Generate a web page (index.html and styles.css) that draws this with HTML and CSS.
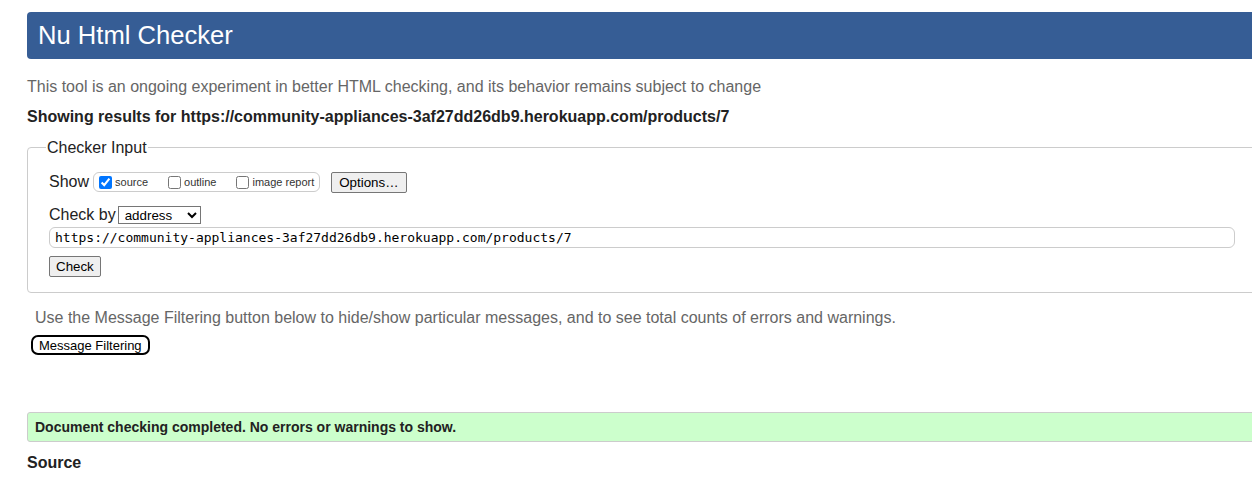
FILE: index.html
```html
<!DOCTYPE html>
<html lang="en">
<head>
<meta charset="utf-8">
<title>Showing results for https://community-appliances-3af27dd26db9.herokuapp.com/products/7 - Nu Html Checker</title>
<link rel="stylesheet" href="styles.css">
</head>
<body>
<div class="page">
  <h1 class="title">Nu Html Checker</h1>
  <p class="tagline">This tool is an ongoing experiment in better HTML checking, and its behavior remains subject to change</p>
  <p class="results-for">Showing results for https://community-appliances-3af27dd26db9.herokuapp.com/products/7</p>
  <form class="checker">
    <fieldset class="input-set">
      <legend class="legend">Checker Input</legend>
      <div class="show-row">
        <span class="row-label">Show</span>
        <span class="show-group">
          <label class="opt"><input type="checkbox" class="cb" checked>source</label>
          <label class="opt"><input type="checkbox" class="cb">outline</label>
          <label class="opt"><input type="checkbox" class="cb">image report</label>
        </span>
        <button type="button" class="btn options">Options…</button>
      </div>
      <div class="by-row">
        <span class="row-label">Check by</span>
        <select class="select"><option>address</option></select>
      </div>
      <input class="url" type="text" value="https://community-appliances-3af27dd26db9.herokuapp.com/products/7">
      <div class="check-row"><button type="button" class="btn check">Check</button></div>
    </fieldset>
  </form>
  <p class="filter-note">Use the Message Filtering button below to hide/show particular messages, and to see total counts of errors and warnings.</p>
  <button type="button" class="filter-btn">Message Filtering</button>
  <p class="success">Document checking completed. No errors or warnings to show.</p>
  <h2 class="source">Source</h2>
</div>
</body>
</html>
```
FILE: styles.css
```css
html, body {
  margin: 0;
  padding: 0;
  overflow: hidden;
  background: #fff;
}
body {
  font-family: "Liberation Sans", Arial, sans-serif;
  color: #222;
}
.page {
  width: 1230px;
  padding: 12px 0 0 27px;
}
.title {
  margin: 0;
  height: 47px;
  box-sizing: border-box;
  padding: 0 0 0 11px;
  background: #365d95;
  color: #fff;
  font-weight: normal;
  font-size: 25.6px;
  line-height: 47px;
  border-radius: 4px;
}
.tagline {
  margin: 18px 0 0;
  font-size: 16px;
  line-height: 19px;
  color: #666;
}
.results-for {
  margin: 11px 0 0;
  font-size: 16px;
  line-height: 19px;
  font-weight: bold;
  color: #222;
}
.checker {
  margin: 0;
}
.input-set {
  margin: 12px 0 0;
  padding: 14px 21px 15px 21px;
  border: 1px solid #ccc;
  border-radius: 4px;
  min-width: 0;
}
.legend {
  padding: 0 1px;
  margin-left: -3px;
  font-size: 16px;
  line-height: 19px;
  color: #222;
}
.show-row {
  display: flex;
  align-items: center;
  height: 22px;
}
.row-label {
  font-size: 16px;
  color: #222;
}
.show-group {
  display: inline-flex;
  align-items: center;
  margin-left: 4px;
  height: 18px;
  padding: 0 5px 0 5px;
  border: 1px solid #ccc;
  border-radius: 6px;
  gap: 20px;
}
.opt {
  display: inline-flex;
  align-items: center;
  font-size: 11px;
  color: #333;
}
.cb {
  margin: 0 3px 0 0;
  width: 13px;
  height: 13px;
}
.btn {
  font-family: "Liberation Sans", Arial, sans-serif;
  font-size: 13.33px;
  background: #efefef;
  border: 1px solid #767676;
  border-radius: 2px;
  color: #000;
  padding: 1px 6px;
}
.options {
  margin-left: 11px;
  height: 21px;
  padding: 1px 7px;
}
.by-row {
  display: flex;
  align-items: center;
  margin-top: 12px;
  height: 20px;
}
.select {
  margin-left: 2px;
  font-family: "Liberation Sans", Arial, sans-serif;
  font-size: 13.33px;
  width: 83px;
  height: 18px;
  padding: 0 0 0 2px;
  border: 1px solid #767676;
  border-radius: 0;
  background: #fff;
  color: #000;
}
.url {
  display: block;
  box-sizing: border-box;
  width: 100%;
  height: 21px;
  margin-top: 2px;
  padding: 0 5px;
  font-family: "DejaVu Sans Mono", monospace;
  font-size: 13px;
  color: #000;
  border: 1px solid #ccc;
  border-radius: 6px;
  background: #fff;
}
.check-row {
  margin-top: 8px;
}
.check {
  height: 21px;
}
.filter-note {
  margin: 15px 0 0 8px;
  font-size: 16px;
  line-height: 19px;
  color: #666;
}
.filter-btn {
  display: block;
  margin: 8px 0 0 4px;
  height: 20px;
  padding: 0 6px;
  font-family: "Liberation Sans", Arial, sans-serif;
  font-size: 13px;
  color: #000;
  background: #fff;
  border: 2px solid #000;
  border-radius: 7px;
}
.success {
  margin: 57px 0 0;
  height: 30px;
  box-sizing: border-box;
  padding: 0 7px;
  line-height: 28px;
  font-size: 14px;
  font-weight: bold;
  color: #222;
  background: #ccffcc;
  border: 1px solid #ccc;
  border-radius: 3px;
}
.source {
  margin: 11px 0 0;
  font-size: 16px;
  line-height: 19px;
  font-weight: bold;
  color: #222;
}
```
